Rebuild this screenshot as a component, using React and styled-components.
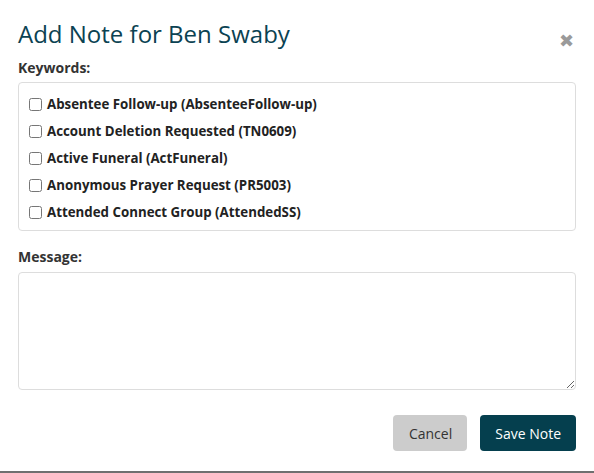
import styled, { createGlobalStyle } from "styled-components";

const GlobalStyle = createGlobalStyle`
  html, body {
    margin: 0;
    padding: 0;
    background: #fff;
  }
  body {
    font-family: "Open Sans", "Liberation Sans", sans-serif;
    color: #333;
  }
`;

const Modal = styled.div`
  width: 594px;
  height: 473px;
  box-sizing: border-box;
  background: #fff;
  border-bottom: 2px solid #6f6f6f;
  display: flex;
  flex-direction: column;
  padding: 0 18px;
`;

const Header = styled.div`
  display: flex;
  align-items: flex-end;
  justify-content: space-between;
  height: 50px;
`;

const Title = styled.h2`
  margin: 0;
  font-size: 24px;
  font-weight: 400;
  color: #0b4252;
  line-height: 32px;
`;

const Close = styled.button`
  border: 0;
  background: none;
  padding: 0;
  margin: 0 2px 0 0;
  color: #9a9a9a;
  font-family: "DejaVu Sans", sans-serif;
  font-size: 18px;
  font-weight: 700;
  line-height: 18px;
  cursor: pointer;
`;

const Label = styled.div`
  font-size: 14px;
  font-weight: 700;
  color: #333;
  line-height: 20px;
  margin-top: ${(p) => p.top}px;
`;

const KeywordBox = styled.div`
  margin-top: 4px;
  height: 149px;
  box-sizing: border-box;
  border: 1px solid #ddd;
  border-radius: 4px;
  padding: 11px 11px 11px 10px;
  display: flex;
  flex-direction: column;
  gap: 7px;
`;

const Option = styled.label`
  display: flex;
  align-items: center;
  gap: 5px;
  font-size: 13.3px;
  font-weight: 700;
  color: #222;
  line-height: 20px;
`;

const Check = styled.input`
  margin: 0;
  width: 13px;
  height: 13px;
`;

const Message = styled.textarea`
  margin-top: 5px;
  height: 118px;
  box-sizing: border-box;
  border: 1px solid #ddd;
  border-radius: 4px;
  resize: vertical;
  font-family: inherit;
  width: 100%;
`;

const Footer = styled.div`
  display: flex;
  justify-content: flex-end;
  gap: 13px;
  margin-top: 25px;
`;

const Button = styled.button`
  height: 36px;
  border: 0;
  border-radius: 4px;
  font-family: "Open Sans", "Liberation Sans", sans-serif;
  font-size: 14px;
  padding: 0 15px 0 ${(p) => (p.primary ? "15px" : "16px")};
  background: ${(p) => (p.primary ? "#053f4e" : "#cccccc")};
  color: ${(p) => (p.primary ? "#fff" : "#333")};
  cursor: pointer;
`;

const keywords = [
  "Absentee Follow-up (AbsenteeFollow-up)",
  "Account Deletion Requested (TN0609)",
  "Active Funeral (ActFuneral)",
  "Anonymous Prayer Request (PR5003)",
  "Attended Connect Group (AttendedSS)",
];

export default function App() {
  return (
    <>
      <GlobalStyle />
      <Modal>
        <Header>
          <Title>Add Note for Ben Swaby</Title>
          <Close aria-label="Close">✖</Close>
        </Header>
        <Label top={8}>Keywords:</Label>
        <KeywordBox>
          {keywords.map((k) => (
            <Option key={k}>
              <Check type="checkbox" />
              {k}
            </Option>
          ))}
        </KeywordBox>
        <Label top={16}>Message:</Label>
        <Message />
        <Footer>
          <Button>Cancel</Button>
          <Button primary>Save Note</Button>
        </Footer>
      </Modal>
    </>
  );
}
